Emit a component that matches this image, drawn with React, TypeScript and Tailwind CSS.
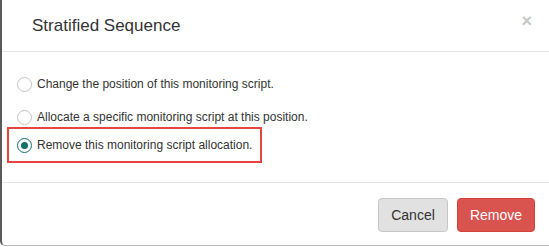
const OPTIONS = [
  'Change the position of this monitoring script.',
  'Allocate a specific monitoring script at this position.',
  'Remove this monitoring script allocation.',
];

function Radio({ checked }: { checked: boolean }) {
  return checked ? (
    <span className="flex h-[15px] w-[15px] shrink-0 items-center justify-center rounded-full border-[1.5px] border-[#13716d] bg-white">
      <span className="h-[7px] w-[7px] rounded-full bg-[#13716d]" />
    </span>
  ) : (
    <span className="h-[15px] w-[15px] shrink-0 rounded-full border border-[#c4c4c4] bg-white" />
  );
}

export default function App() {
  const selected = 2;
  return (
    <div className="h-[247px] w-[549px] overflow-hidden bg-white" style={{ fontFamily: '"Liberation Sans", Arial, sans-serif' }}>
      <div className="h-[246px] w-[560px] rounded-bl-[5px] border-b border-l-2 border-[#5a5a5a] border-b-[#bdbdbd] bg-white">
        <div className="flex h-[52px] items-center justify-between border-b border-[#e5e5e5] pl-[30px] pr-[28px]">
          <h4 className="text-[17px] text-[#333]">Stratified Sequence</h4>
          <span className="-mt-[9px] text-[18px] font-bold leading-none text-[#c8c8c8]">×</span>
        </div>
        <div className="flex h-[131px] flex-col border-b border-[#e5e5e5] px-[5px] pt-[22px]">
          {OPTIONS.map((label, i) => (
            <label
              key={label}
              className={
                i === selected
                  ? 'flex h-[36px] w-[255px] items-center gap-[5px] border-2 border-[#e5453f] pl-[8px] text-[12px] text-[#333]'
                  : i === 0
                    ? 'flex h-[20px] items-center gap-[5px] pl-[10px] text-[12px] text-[#333]'
                    : 'mt-[13px] flex h-[20px] items-center gap-[5px] pl-[10px] text-[12px] text-[#333]'
              }
            >
              <Radio checked={i === selected} />
              {label}
            </label>
          ))}
        </div>
        <div className="flex justify-end gap-[9px] pr-[25px] pt-[15px]">
          <button className="h-[34px] w-[70px] rounded-[4px] border border-[#c6c6c6] bg-[#e1e1e1] text-[14px] text-[#333]">
            Cancel
          </button>
          <button className="h-[34px] w-[78px] rounded-[4px] border border-[#d43f3a] bg-[#d9534f] text-[14px] text-white">
            Remove
          </button>
        </div>
      </div>
    </div>
  );
}
